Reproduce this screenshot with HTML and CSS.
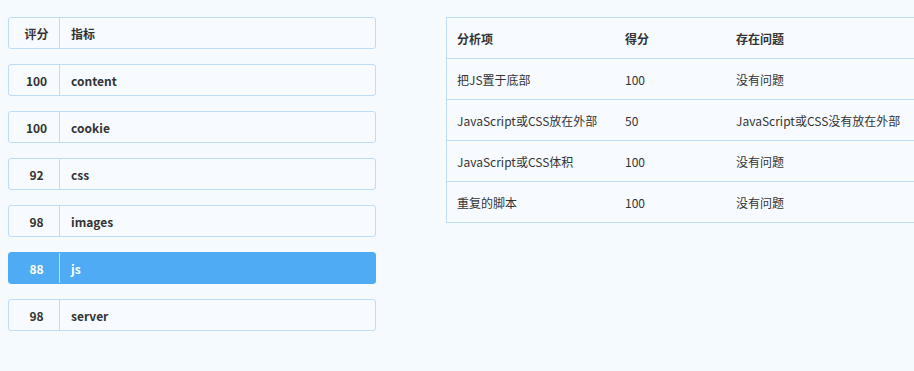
FILE: index.html
```html
<!DOCTYPE html>
<html lang="zh-CN">
<head>
    <meta charset="UTF-8">
    <title>性能分析</title>
    <link rel="stylesheet" href="styles.css">
</head>
<body>
    <div class="page">
        <div class="score-list">
            <div class="score-item head">
                <span class="score">评分</span>
                <span class="name">指标</span>
            </div>
            <div class="score-item">
                <span class="score">100</span>
                <span class="name">content</span>
            </div>
            <div class="score-item">
                <span class="score">100</span>
                <span class="name">cookie</span>
            </div>
            <div class="score-item">
                <span class="score">92</span>
                <span class="name">css</span>
            </div>
            <div class="score-item">
                <span class="score">98</span>
                <span class="name">images</span>
            </div>
            <div class="score-item active">
                <span class="score">88</span>
                <span class="name">js</span>
            </div>
            <div class="score-item">
                <span class="score">98</span>
                <span class="name">server</span>
            </div>
        </div>

        <div class="detail">
            <table class="detail-table">
                <thead>
                    <tr>
                        <th class="col-item">分析项</th>
                        <th class="col-score">得分</th>
                        <th>存在问题</th>
                    </tr>
                </thead>
                <tbody>
                    <tr>
                        <td>把JS置于底部</td>
                        <td>100</td>
                        <td>没有问题</td>
                    </tr>
                    <tr>
                        <td>JavaScript或CSS放在外部</td>
                        <td>50</td>
                        <td>JavaScript或CSS没有放在外部</td>
                    </tr>
                    <tr>
                        <td>JavaScript或CSS体积</td>
                        <td>100</td>
                        <td>没有问题</td>
                    </tr>
                    <tr>
                        <td>重复的脚本</td>
                        <td>100</td>
                        <td>没有问题</td>
                    </tr>
                </tbody>
            </table>
        </div>
    </div>
</body>
</html>
```

FILE: styles.css
```css
html, body {
    margin: 0;
    overflow: hidden;
}

body {
    background: #f5faff;
    font-family: "Microsoft YaHei", "Noto Sans CJK SC", "Noto Sans", sans-serif;
    font-size: 12px;
    color: #333;
    padding: 17px 0 0 8px;
}

.page {
    display: flex;
    align-items: flex-start;
    gap: 70px;
}

.score-list {
    width: 368px;
    flex-shrink: 0;
    display: flex;
    flex-direction: column;
    gap: 15px;
}

.score-item {
    display: flex;
    height: 30px;
    border: 1px solid #bddcf8;
    border-radius: 3px;
    background: #f7fbff;
    font-weight: bold;
    align-items: stretch;
}

.score-item .score {
    width: 45px;
    padding-left: 5px;
    border-right: 1px solid #bddcf8;
    display: flex;
    align-items: center;
    justify-content: center;
}

.score-item .name {
    display: flex;
    align-items: center;
    padding-left: 11px;
}

.score-item.active {
    background: #4eabf4;
    border-color: #4eabf4;
    color: #fff;
}

.score-item.active .score {
    border-right-color: #b8dcfb;
}

/* the table runs on past the right edge of the window */
.detail {
    flex: 1;
    min-width: 0;
    overflow: hidden;
}

.detail-table {
    width: 520px;
    border-collapse: collapse;
    border: 1px solid #bddcf8;
    background: #f7fbff;
}

.detail-table th,
.detail-table td {
    height: 40px;
    padding: 0 10px;
    text-align: left;
    border-bottom: 1px solid #bddcf8;
    white-space: nowrap;
}

.detail-table th {
    font-weight: bold;
}

.detail-table .col-item {
    width: 148px;
}

.detail-table .col-score {
    width: 91px;
}
```
